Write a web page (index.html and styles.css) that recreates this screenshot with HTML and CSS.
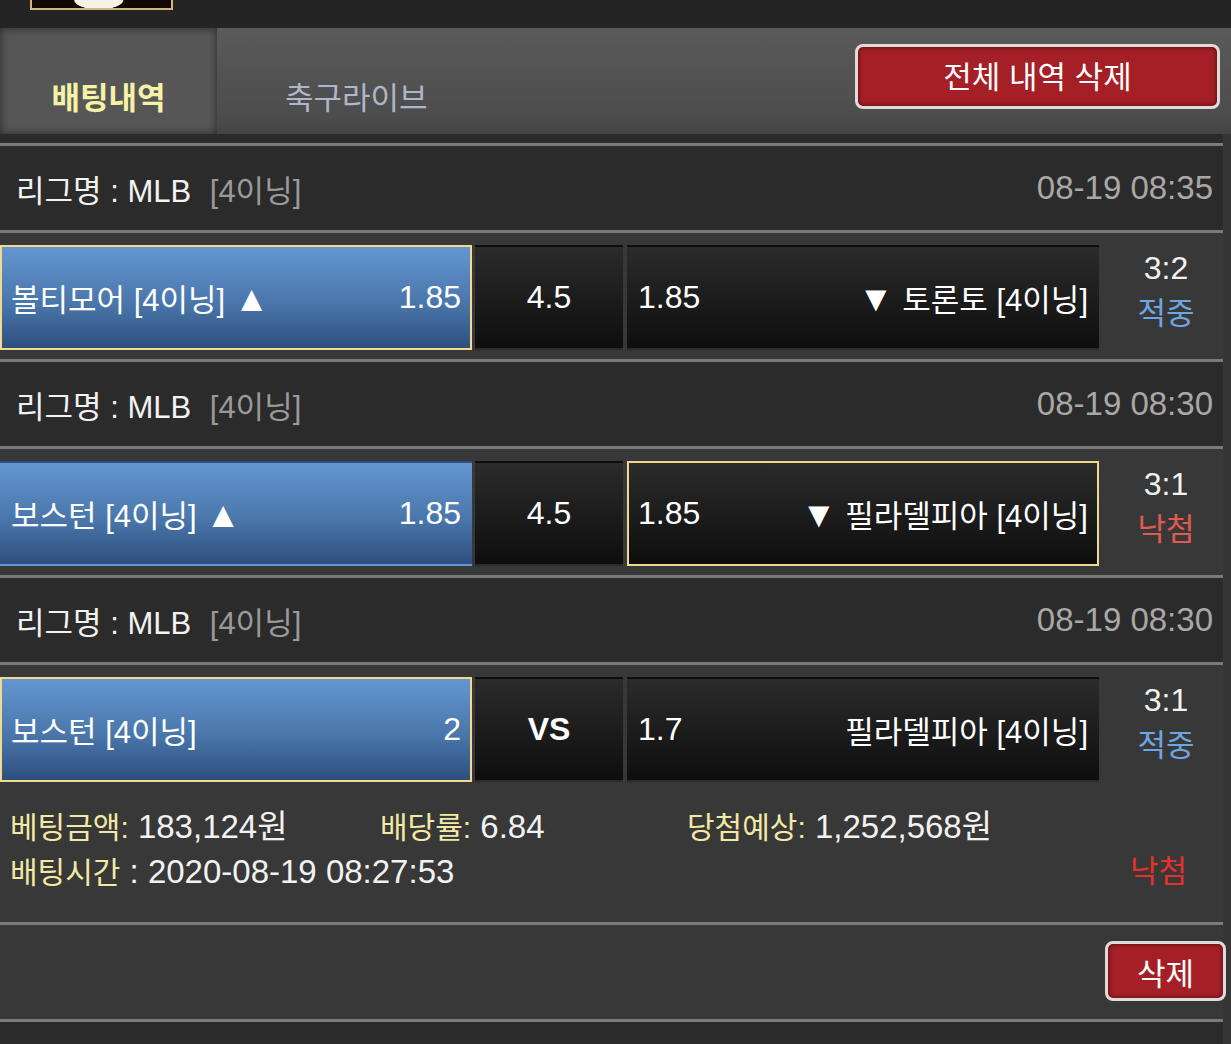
FILE: index.html
```html
<!DOCTYPE html>
<html lang="ko">
<head>
  <meta charset="UTF-8" />
  <meta name="viewport" content="width=device-width, initial-scale=1.0"/>
  <title>배팅내역</title>
  <link rel="stylesheet" href="styles.css">
</head>
<body>
  <div class="topbar"><div class="logo"></div></div>

  <div class="tabs">
    <a class="tab active">배팅내역</a>
    <a class="tab">축구라이브</a>
    <button class="btn-red btn-all">전체 내역 삭제</button>
  </div>

  <div class="list">
    <div class="league"><span>리그명 : MLB <em>[4이닝]</em></span><span class="date">08-19 08:35</span></div>
    <div class="match">
      <div class="cell home picked"><span>볼티모어 [4이닝] <i class="arrow">▲</i></span><span class="odd">1.85</span></div>
      <div class="cell mid">4.5</div>
      <div class="cell away"><span class="odd">1.85</span><span><i class="arrow">▼</i> 토론토 [4이닝]</span></div>
      <div class="result"><div>3:2</div><div class="hit">적중</div></div>
    </div>

    <div class="league"><span>리그명 : MLB <em>[4이닝]</em></span><span class="date">08-19 08:30</span></div>
    <div class="match">
      <div class="cell home"><span>보스턴 [4이닝] <i class="arrow">▲</i></span><span class="odd">1.85</span></div>
      <div class="cell mid">4.5</div>
      <div class="cell away picked"><span class="odd">1.85</span><span><i class="arrow">▼</i> 필라델피아 [4이닝]</span></div>
      <div class="result"><div>3:1</div><div class="miss">낙첨</div></div>
    </div>

    <div class="league"><span>리그명 : MLB <em>[4이닝]</em></span><span class="date">08-19 08:30</span></div>
    <div class="match last">
      <div class="cell home picked"><span>보스턴 [4이닝]</span><span class="odd">2</span></div>
      <div class="cell mid vs">VS</div>
      <div class="cell away"><span class="odd">1.7</span><span>필라델피아 [4이닝]</span></div>
      <div class="result"><div>3:1</div><div class="hit">적중</div></div>
    </div>
    <div class="info">
      <div class="info-row">
        <span class="col1"><b>베팅금액:</b> 183,124원</span>
        <span class="col2"><b>배당률:</b> 6.84</span>
        <span><b>당첨예상:</b> 1,252,568원</span>
      </div>
      <div class="info-row">
        <span><b>배팅시간</b> : 2020-08-19 08:27:53</span>
        <span class="lost">낙첨</span>
      </div>
    </div>

    <div class="footer">
      <button class="btn-red btn-del">삭제</button>
    </div>
    <div class="end"></div>
  </div>
</body>
</html>
```

FILE: styles.css
```css
body {
  margin: 0;
  width: 1231px;
  background: #363636;
  color: #f2f2f2;
  font-family: "Liberation Sans", "Noto Sans CJK KR", sans-serif;
  font-size: 31px;
}
.topbar {
  height: 28px;
  background: #242424;
  padding-left: 30px;
}
.logo {
  width: 139px;
  height: 8px;
  border: 2px solid #cfb679;
  border-top: 0;
  background: radial-gradient(ellipse 34px 13px at 48% 0, #f6f2e8 70%, transparent 74%), #120800;
}
.tabs {
  display: flex;
  height: 106px;
  background: linear-gradient(#5a5a5a, #4c4c4c 85%, #444);
}
.tab {
  display: flex;
  align-items: center;
  padding-top: 28px;
  font-size: 31px;
  color: #aeb6c8;
  padding-left: 68px;
}
.tab.active {
  width: 217px;
  padding-left: 0;
  justify-content: center;
  background: #565656;
  box-shadow: inset 0 0 8px rgba(0, 0, 0, .55);
  color: #f5f2a6;
  font-weight: bold;
}
.btn-red {
  background: #a51f26;
  border: 3px solid #e2dada;
  border-radius: 8px;
  color: #fff;
  font-family: inherit;
  box-shadow: inset 0 0 5px rgba(0, 0, 0, .6);
  padding: 0;
}
.btn-all {
  align-self: flex-start;
  margin: 16px 11px 0 auto;
  width: 365px;
  height: 65px;
  font-size: 31px;
  padding-bottom: 4px;
}
.list {
  width: 1223px;
  padding-top: 9px;
  background: #2b2b2b;
}
.league {
  display: flex;
  justify-content: space-between;
  align-items: center;
  height: 84px;
  border-top: 3px solid #7b7b7b;
  padding: 0 10px 0 16px;
}
.league em {
  font-style: normal;
  color: #9a9a9a;
  margin-left: 10px;
}
.date {
  color: #a8a8a8;
  font-size: 33px;
}
.match {
  display: flex;
  border-top: 3px solid #7b7b7b;
  background: #383838;
  padding: 12px 0 9px;
}
.match.last {
  padding-bottom: 0;
}
.cell {
  box-sizing: border-box;
  height: 105px;
  display: flex;
  align-items: center;
  justify-content: space-between;
  border: 2px solid transparent;
  font-size: 31px;
  color: #fff;
}
.odd {
  font-size: 32px;
}
.arrow {
  font-style: normal;
  font-size: 36px;
  line-height: 1;
}
.home {
  width: 472px;
  padding-left: 9px;
  padding-right: 9px;
  background: linear-gradient(#6396d0, #4a77ab 55%, #2e4f7e);
}
.mid {
  width: 148px;
  margin-left: 3px;
  justify-content: center;
  font-size: 32px;
  background: linear-gradient(#2b2b2b, #0e0e0e);
}
.vs {
  font-weight: bold;
}
.away {
  width: 472px;
  margin-left: 4px;
  padding-left: 9px;
  padding-right: 9px;
  background: linear-gradient(#2b2b2b, #0e0e0e);
}
.cell.picked {
  border-color: #f1d98f;
}
.result {
  flex: 1;
  text-align: center;
  line-height: 46px;
  padding-left: 10px;
  font-size: 32px;
}
.hit {
  color: #6ea6e0;
  font-size: 31px;
}
.miss {
  color: #e05a52;
  font-size: 31px;
}
.info {
  background: #383838;
  padding: 23px 36px 27px 10px;
  font-size: 33px;
}
.info-row {
  display: flex;
  line-height: 44px;
}
.info-row:last-child {
  justify-content: space-between;
}
.info b {
  font-weight: normal;
  color: #f2eaa4;
  font-size: 30px;
}
.col1 {
  width: 370px;
}
.col2 {
  width: 307px;
}
.lost {
  color: #e3322b;
  font-size: 31px;
}
.footer {
  display: flex;
  justify-content: flex-end;
  height: 94px;
  border-top: 3px solid #7b7b7b;
  background: #383838;
}
.btn-del {
  margin: 16px -3px 0 0;
  width: 121px;
  height: 60px;
  font-size: 31px;
}
.end {
  height: 30px;
  border-top: 3px solid #7b7b7b;
}
```
